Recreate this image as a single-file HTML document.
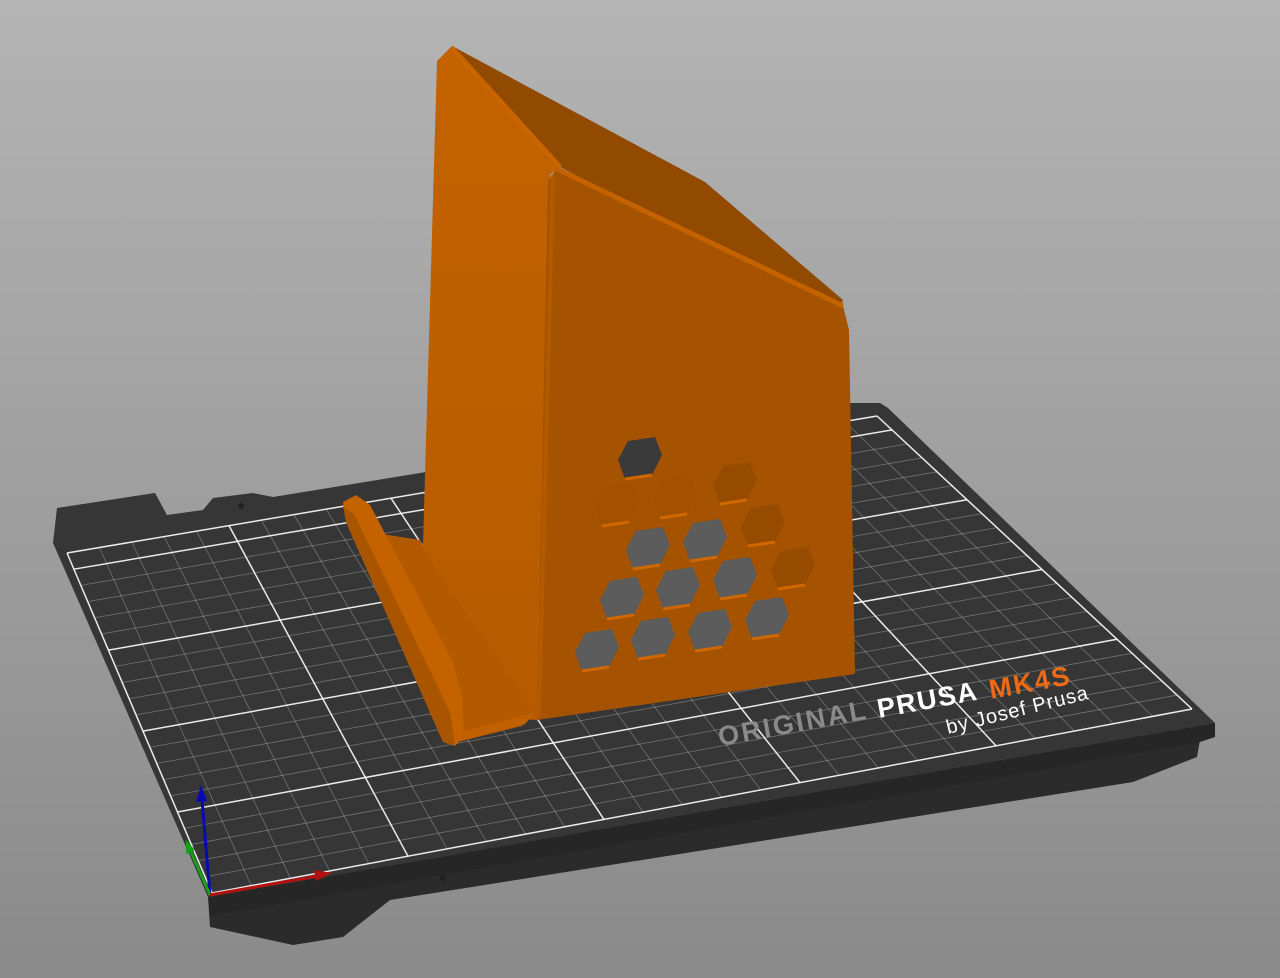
<!DOCTYPE html>
<html><head><meta charset="utf-8"><style>
html,body{margin:0;padding:0;width:1280px;height:978px;overflow:hidden}
svg{display:block}
</style></head><body>
<svg id="s" width="1280" height="978" viewBox="0 0 1280 978" xmlns="http://www.w3.org/2000/svg">
<defs>
<linearGradient id="bg" x1="0" y1="0" x2="0" y2="1">
<stop offset="0" stop-color="#b4b4b4"/><stop offset="1" stop-color="#8a8a8a"/>
</linearGradient>
<linearGradient id="lf" x1="0" y1="0" x2="0" y2="1">
<stop offset="0" stop-color="#c46200"/><stop offset="1" stop-color="#b65b00"/>
</linearGradient>
</defs>
<rect width="1280" height="978" fill="url(#bg)"/>
<polygon points="208,897 210,927 293,945 343,937 390,900 1133,782 1197,757 1200,740 1215,737 1215,723" fill="#2b2b2b"/>
<polygon points="208,897 1215,723 1215,737 1200,742 390,884 210,916" fill="#262626"/>
<polygon points="53,543 57,508 155,493 167,515 203,510 213,498 253,493 273,497 850,403 880,403 888,408 1215,723 208,897" fill="#363636"/>
<g id="grid"></g>
<circle cx="241" cy="506" r="3" fill="#222"/>
<circle cx="443" cy="878" r="3" fill="#222"/>
<circle cx="1003" cy="767" r="3" fill="#222"/>
<g font-family="Liberation Sans, sans-serif" font-weight="bold">
<text x="0" y="0" font-size="27" fill="#8a8a8a" transform="translate(720,746) rotate(-10.5)" letter-spacing="2.5">ORIGINAL</text>
<text x="0" y="0" font-size="27" fill="#ffffff" transform="translate(879,718) rotate(-10.5)" letter-spacing="1.5">PRUSA</text>
<text x="0" y="0" font-size="27" fill="#ef6a12" transform="translate(991,699) rotate(-10.5)" letter-spacing="2">MK4S</text>
<text x="0" y="0" font-size="20" font-weight="normal" fill="#ffffff" transform="translate(948,734) rotate(-14)" letter-spacing="1">by Josef Prusa</text>
</g>
<line x1="210" y1="895" x2="202" y2="800" stroke="#0a0ab5" stroke-width="3"/>
<polygon points="196,802 201,785 207,801" fill="#0a0ab5"/>
<line x1="210" y1="895" x2="191" y2="852" stroke="#18a018" stroke-width="3"/>
<polygon points="186,854 186,840 195,850" fill="#18a018"/>
<line x1="210" y1="895" x2="318" y2="876" stroke="#b51010" stroke-width="3"/>
<polygon points="314,870 332,873 316,881" fill="#b51010"/>
<polygon points="452,46 705,182 843,300 838,312 560,167 440,64" fill="#924900"/>
<polygon points="437,61 452,46 560,167 550,175 537,720 430,715 423,545" fill="url(#lf)"/>
<polygon points="557,169 843,306 849,330 855,674 537,720 548,180" fill="#a55300"/>
<line x1="557" y1="169" x2="843" y2="306" stroke="#c46200" stroke-width="5"/>
<line x1="553" y1="175" x2="539" y2="718" stroke="#b35a00" stroke-width="4"/>
<line x1="452" y1="48" x2="560" y2="167" stroke="#c86500" stroke-width="5"/>
<g id="hex"></g>
<polygon points="356,530 420,540 430,560 536,712 522,726 458,742 410,650" fill="#b35a00"/>
<polygon points="343,502 356,495 370,505 452,660 462,695 464,736 455,746 443,742 346,522" fill="#c46200"/>
<polygon points="343,506 346,522 443,742 455,746 450,712 354,514" fill="#a95500"/>
<polygon points="455,742 525,724 536,712 462,732" fill="#c06000"/>
</svg>
<script>
(function(){
var NS="http://www.w3.org/2000/svg";
var A=[67,553],B=[877,416],C=[1192,709],D=[212,893];
function P(u,v){
 var tx=A[0]+(B[0]-A[0])*u, ty=A[1]+(B[1]-A[1])*u;
 var bx=D[0]+(C[0]-D[0])*u, by=D[1]+(C[1]-D[1])*u;
 return [tx+(bx-tx)*v, ty+(by-ty)*v];}
var g=document.getElementById("grid");
function L(p,q,c,w){var l=document.createElementNS(NS,"line");l.setAttribute("x1",p[0]);l.setAttribute("y1",p[1]);l.setAttribute("x2",q[0]);l.setAttribute("y2",q[1]);l.setAttribute("stroke",c);l.setAttribute("stroke-width",w);g.appendChild(l);}
var NU=25,NV=21,i;
for(i=0;i<=NU;i++){var m=(i%5==0);L(P(i/NU,0),P(i/NU,1),m?"rgba(255,255,255,0.9)":"rgba(255,255,255,0.3)",m?1.5:0.8);}
for(i=0;i<=NV;i++){var k=NV-i;var m=(k%5==0)||i==0;L(P(0,i/NV),P(1,i/NV),m?"rgba(255,255,255,0.9)":"rgba(255,255,255,0.3)",m?1.5:0.8);}
var h=document.getElementById("hex");
var pts=[[-22,2],[-12,-17],[15,-21],[22,-3],[12,17],[-15,21]];
function hex(cx,cy,fill,hl){
 var p=document.createElementNS(NS,"polygon");
 p.setAttribute("points",pts.map(function(q){return (cx+q[0])+","+(cy+q[1]);}).join(" "));
 p.setAttribute("fill",fill);h.appendChild(p);
 if(hl){var l=document.createElementNS(NS,"line");l.setAttribute("x1",cx+12);l.setAttribute("y1",cy+17);l.setAttribute("x2",cx-15);l.setAttribute("y2",cy+21);l.setAttribute("stroke","#d06800");l.setAttribute("stroke-width","3");h.appendChild(l);}
}
var holes=[[597,650],[653,638],[710,630],[767,618],[622,598],[678,588],[735,578],[648,548],[705,540]];
holes.forEach(function(c){hex(c[0],c[1],"#5c5c5c",true);});
hex(640,458,"#3a3a3a",true);
[[793,568],[763,525],[735,483]].forEach(function(c){hex(c[0],c[1],"#974b00",true);});
[[617,505],[675,497]].forEach(function(c){hex(c[0],c[1],"#a35100",true);});
})();
</script>
</body></html>
